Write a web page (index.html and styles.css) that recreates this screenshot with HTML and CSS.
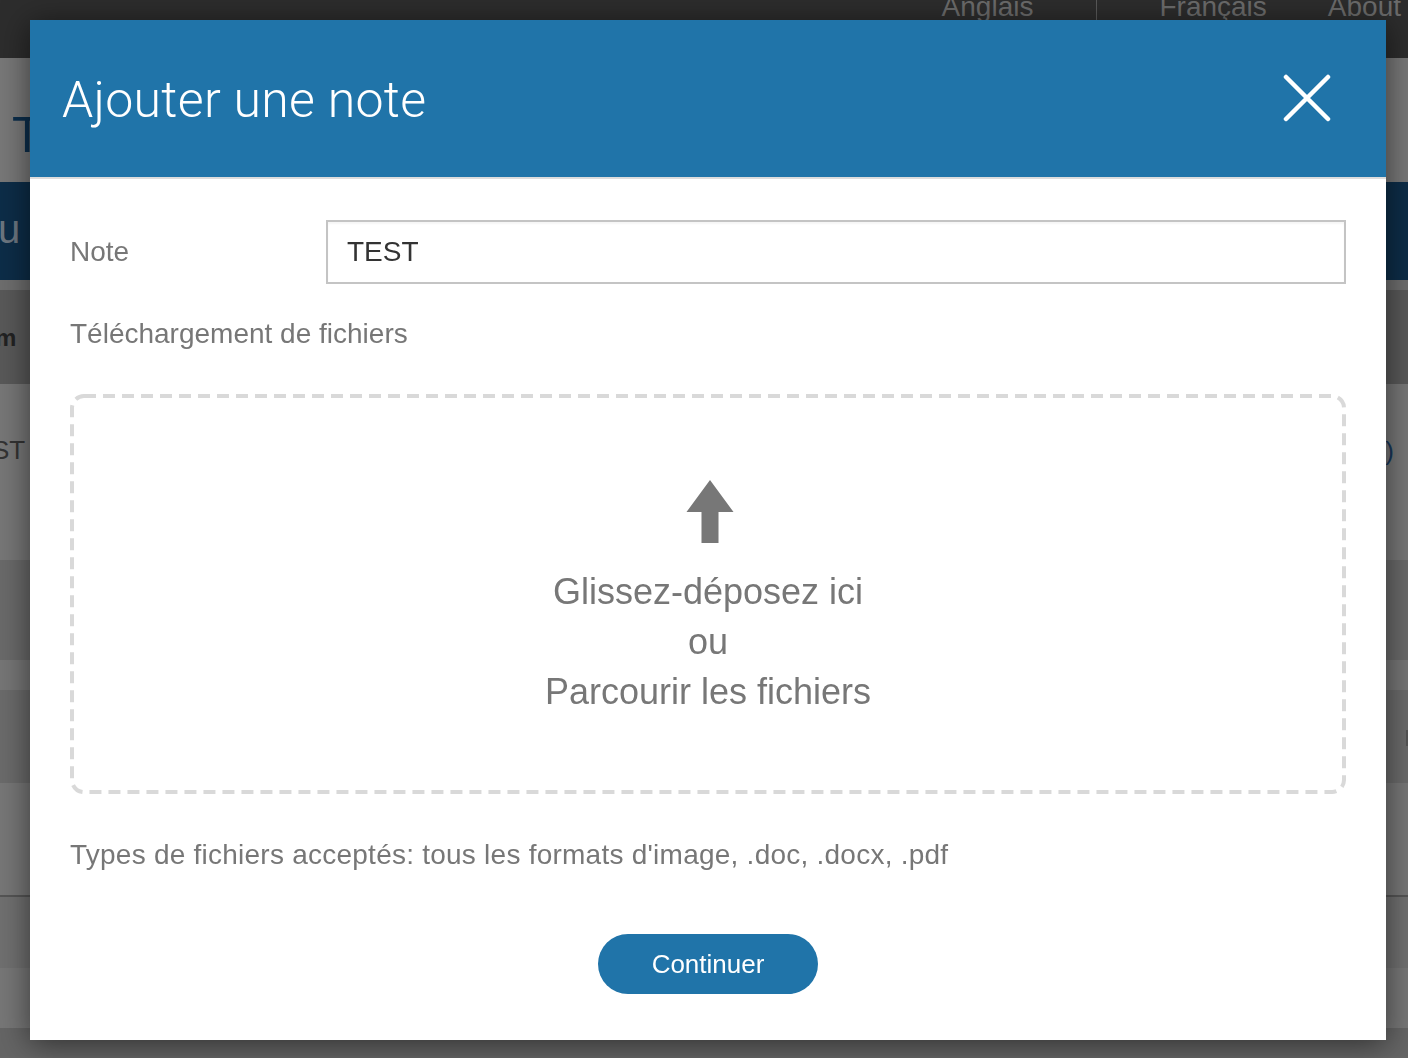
FILE: index.html
```html
<!DOCTYPE html>
<html lang="fr">
<head>
<meta charset="utf-8">
<title>Ajouter une note</title>
<link rel="stylesheet" href="styles.css">
</head>
<body>
<div class="page">
  <header class="topbar">
    <nav class="nav">
      <span class="nav-item">Anglais</span>
      <span class="nav-sep"></span>
      <span class="nav-item">Français</span>
      <span class="nav-item">About</span>
    </nav>
  </header>
  <div class="band band-title"><span class="page-title">T</span></div>
  <div class="band band-navy"><span class="navy-text">u</span></div>
  <div class="band band-gap"></div>
  <div class="band band-head"><span class="head-text">m</span></div>
  <div class="band band-row"><span class="row-text">ST</span><span class="row-right">)</span></div>
  <div class="band band-a"></div>
  <div class="band band-b"></div>
  <div class="band band-a2"><span class="edge-mark"></span></div>
  <div class="band band-c"></div>
  <div class="band band-d"></div>
  <div class="band band-e"></div>
  <div class="band band-f"></div>
</div>

<div class="modal" role="dialog" aria-labelledby="modal-title">
  <div class="modal-header">
    <h1 id="modal-title" class="modal-title">Ajouter une note</h1>
    <button class="modal-close" aria-label="Fermer">
      <svg width="48" height="48" viewBox="0 0 48 48"><path d="M3 3 L45 45 M45 3 L3 45" stroke="#fff" stroke-width="4.5" stroke-linecap="round" fill="none"/></svg>
    </button>
  </div>
  <div class="modal-body">
    <div class="field-row">
      <label class="field-label" for="note">Note</label>
      <input id="note" class="field-input" type="text" value="TEST">
    </div>
    <div class="section-label">Téléchargement de fichiers</div>
    <div class="dropzone">
      <svg class="dropzone-border" width="100%" height="100%" aria-hidden="true"><rect x="2" y="2" width="calc(100% - 4px)" height="calc(100% - 4px)" rx="12" ry="12" fill="none" stroke="#d9d9d9" stroke-width="4" stroke-dasharray="12 7"/></svg>
      <svg class="upload-icon" width="48" height="64" viewBox="0 0 48 64"><path d="M24 0 L47.5 32 L32.5 32 L32.5 63 L15.5 63 L15.5 32 L0.5 32 Z" fill="#777"/></svg>
      <div class="drop-text">Glissez-déposez ici</div>
      <div class="drop-text">ou</div>
      <div class="drop-text">Parcourir les fichiers</div>
    </div>
    <p class="file-types">Types de fichiers acceptés: tous les formats d'image, .doc, .docx, .pdf</p>
    <div class="actions">
      <button class="btn-primary">Continuer</button>
    </div>
  </div>
</div>
</body>
</html>
```

FILE: styles.css
```css
* { box-sizing: border-box; }

html, body {
  margin: 0;
  padding: 0;
  height: 100%;
  overflow: hidden;
}

body {
  font-family: "Liberation Sans", Arial, Helvetica, sans-serif;
  background: #666;
}

/* ---------- background page (dimmed by overlay) ---------- */
.page {
  display: flex;
  flex-direction: column;
  height: 1058px;
}

.topbar {
  height: 58px;
  background: #2d2d2d;
  display: flex;
  justify-content: flex-end;
  overflow: hidden;
}

.nav {
  display: flex;
  align-items: flex-start;
  height: 100%;
  margin-top: -9px;
  padding-right: 7px;
}

.nav-item {
  font-size: 28px;
  line-height: 32px;
  color: #6c6c6c;
}

.nav-item + .nav-item { margin-left: 61px; }

.nav-sep {
  width: 1px;
  height: 30px;
  background: #5a5a5a;
  margin: 0 62px 0 63px;
}

.band {
  position: relative;
  overflow: hidden;
  flex: none;
}

.band-title { height: 124px; background: #787878; }
.page-title {
  display: block;
  font-size: 50px;
  line-height: 50px;
  margin: 52px 0 0 12px;
  color: #0c2e4c;
}

.band-navy { height: 98px; background: #0d2d48; }
.navy-text {
  display: block;
  font-size: 40px;
  line-height: 40px;
  margin: 27px 0 0 -2px;
  color: #6c7680;
}

.band-gap { height: 10px; background: #6e6e6e; }

.band-head { height: 94px; background: #595959; }
.head-text {
  display: block;
  font-size: 24px;
  font-weight: bold;
  line-height: 24px;
  margin: 36px 0 0 -5px;
  color: #222;
}

.band-row { height: 176px; background: #777; }
.row-text {
  display: block;
  font-size: 26px;
  line-height: 26px;
  margin: 53px 0 0 -8px;
  color: #333;
}
.row-right {
  position: absolute;
  right: 14px;
  top: 52px;
  font-size: 26px;
  color: #18385a;
}

.band-a { height: 100px; background: #6a6a6a; }
.band-b { height: 30px; background: #767676; }
.band-a2 { height: 93px; background: #6b6b6b; }
.edge-mark {
  position: absolute;
  right: 0;
  top: 40px;
  width: 2px;
  height: 16px;
  background: #555;
}
.band-c { height: 114px; background: #777; border-bottom: 2px solid #555; }
.band-d { height: 71px; background: #707070; }
.band-e { height: 60px; background: #777; }
.band-f { height: 28px; background: #656565; }

/* ---------- modal ---------- */
.modal {
  position: fixed;
  left: 30px;
  top: 20px;
  width: 1356px;
  height: 1020px;
  background: #fff;
  box-shadow: 0 4px 30px rgba(0, 0, 0, 0.55);
  display: flex;
  flex-direction: column;
}

.modal-header {
  height: 159px;
  background: #2074a9;
  border-bottom: 2px solid #dddddd;
  display: flex;
  align-items: center;
  justify-content: space-between;
  padding: 0 55px 0 32px;
}

.modal-title {
  margin: 2px 0 0;
  font-family: Roboto, "Liberation Sans", Arial, sans-serif;
  font-size: 50px;
  font-weight: 300;
  letter-spacing: 0.3px;
  color: #fff;
  line-height: 60px;
}

.modal-close {
  background: none;
  border: 0;
  padding: 0;
  width: 48px;
  height: 48px;
  cursor: pointer;
  margin-top: -2px;
}
.modal-close svg { display: block; }

.modal-body {
  padding: 41px 40px 46px;
  display: flex;
  flex-direction: column;
  flex: 1;
}

.field-row {
  display: flex;
  align-items: center;
  height: 64px;
}

.field-label {
  width: 256px;
  font-size: 28px;
  color: #777;
}

.field-input {
  flex: 1;
  height: 64px;
  border: 2px solid #c4c4c4;
  border-radius: 0;
  padding: 0 19px;
  font-family: inherit;
  font-size: 28px;
  color: #333;
  background: #fff;
  box-shadow: inset 0 2px 2px rgba(0,0,0,0.04);
  outline: none;
}

.section-label {
  margin-top: 34px;
  font-size: 28px;
  line-height: 32px;
  color: #777;
}

.dropzone {
  position: relative;
  margin-top: 44px;
  height: 400px;
  display: flex;
  flex-direction: column;
  align-items: center;
  padding-top: 86px;
}

.dropzone-border {
  position: absolute;
  left: 0;
  top: 0;
  pointer-events: none;
}

.upload-icon { display: block; margin: 0 0 23px 3px; }

.drop-text {
  font-size: 36px;
  line-height: 50px;
  color: #777;
}

.file-types {
  margin: 43px 0 0;
  font-size: 28px;
  line-height: 36px;
  letter-spacing: 0.24px;
  color: #777;
}

.actions {
  display: flex;
  justify-content: center;
  margin-top: 61px;
}

.btn-primary {
  width: 220px;
  height: 60px;
  border: 0;
  border-radius: 30px;
  background: #2074a9;
  color: #fff;
  font-family: inherit;
  font-size: 26px;
  cursor: pointer;
}
```
